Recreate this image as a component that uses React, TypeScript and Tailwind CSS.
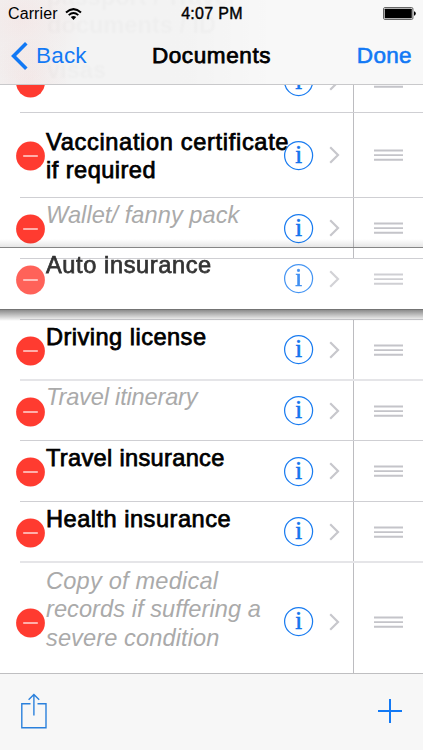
import React from 'react';

type Item = {
  lines: string[];
  spacing: string[];
  packed?: boolean;
  height: string;
  pad: string;
  soft?: boolean;
};

const items: Item[] = [
  { lines: ['Vaccination certificate', 'if required'], spacing: ['tracking-[0.67px]', 'tracking-[0.46px]'], height: 'h-[85px]', pad: 'pt-[15px]' },
  { lines: ['Wallet/ fanny pack'], spacing: ['tracking-[0.06px]'], packed: true, height: 'h-[61px]', pad: 'pt-[3px]' },
  { lines: [], spacing: [], height: 'h-[61px]', pad: '' },
  { lines: ['Driving license'], spacing: ['tracking-[0.47px]'], height: 'h-[60px]', pad: 'pt-[3px]' },
  { lines: ['Travel itinerary'], spacing: ['tracking-[-0.18px]'], packed: true, height: 'h-[61px]', pad: 'pt-[2px]', soft: true },
  { lines: ['Travel insurance'], spacing: ['tracking-[0.32px]'], height: 'h-[61px]', pad: 'pt-[3px]' },
  { lines: ['Health insurance'], spacing: ['tracking-[0.5px]'], height: 'h-[60px]', pad: 'pt-[3px]' },
  { lines: ['Copy of medical', 'records if suffering a', 'severe condition'], spacing: ['tracking-[0.2px]', 'tracking-[0.05px]', 'tracking-[0.1px]'], packed: true, height: 'h-[119px]', pad: 'pt-[4px]', soft: true },
];

function Minus() {
  return (
    <svg className="mt-[2px] block h-[30px] w-[30px] shrink-0" viewBox="0 0 30 30">
      <circle cx="14.5" cy="15" r="14.4" fill="#ff3b30" />
      <path d="M7.2 15H21.8" stroke="#fff" strokeOpacity=".85" strokeWidth="1.4" />
    </svg>
  );
}

function Info() {
  return (
    <svg className="block h-[29px] w-[29px] shrink-0 overflow-visible" viewBox="0 0 29 29">
      <circle cx="14.6" cy="14.5" r="14" fill="none" stroke="#1a7cf0" strokeWidth="1.25" />
      <text x="14.6" y="22.2" textAnchor="middle" fill="#1274ee" stroke="#1274ee" strokeWidth=".6" className="font-['Liberation_Serif',serif] text-[24.5px]">i</text>
    </svg>
  );
}

function Chevron() {
  return (
    <svg className="ml-4 block h-[18px] w-[11px] shrink-0" viewBox="0 0 11 18" fill="none">
      <path d="M1.2 1.2L9 9L1.2 16.8" stroke="#c7c7cc" strokeWidth="2.2" />
    </svg>
  );
}

function Grip() {
  return (
    <svg className="ml-5 block h-[12px] w-[29px]" viewBox="0 0 29 12">
      <path d="M0 1.5H29M0 6.1H29M0 10.7H29" stroke="#c4c4c9" strokeWidth="1.9" />
    </svg>
  );
}

function RowBody({ item, divider }: { item: Item; divider: boolean }) {
  return (
    <div className="-ml-1 flex h-full items-center">
      <Minus />
      <div className={`h-full w-[238px] shrink-0 whitespace-nowrap text-[23.6px] leading-[28.3px] ${item.pad} ${item.packed ? 'italic text-[#aaaaaa]' : 'text-black [-webkit-text-stroke:0.75px_black]'}`}>
        {item.lines.map((line, i) => (
          <div key={line}><span className={item.spacing[i]}>{line}</span></div>
        ))}
      </div>
      <Info />
      <Chevron />
      <div className={`ml-[13px] flex h-full items-center border-l ${divider ? 'border-[#bcbcc0]' : 'border-transparent'}`}>
        <Grip />
      </div>
    </div>
  );
}

function StatusBar() {
  return (
    <div className="grid h-[28px] grid-cols-3 items-center pl-2 pr-[7px]">
      <div className="flex items-center gap-[7px] text-[16px] leading-none">
        <span className="tracking-[0.1px]">Carrier</span>
        <svg className="h-[12px] w-[17px]" viewBox="0 0 17 12" fill="none">
          <path d="M1 4.4Q8.5-2.2 16 4.4" stroke="#000" strokeWidth="2" />
          <path d="M3.7 7.1Q8.5 3 13.3 7.1" stroke="#000" strokeWidth="1.9" />
          <path d="M5.8 9.1Q8.5 7 11.2 9.1L8.5 11.9Z" fill="#000" />
        </svg>
      </div>
      <div className="text-center text-[16px] leading-none tracking-[0.3px] [-webkit-text-stroke:0.4px_black]">4:07 PM</div>
      <svg className="-mt-px h-[13px] w-[33px] justify-self-end" viewBox="0 0 33 13">
        <rect x=".6" y=".6" width="29.3" height="11.8" rx="1.2" fill="#fff" stroke="#555" strokeWidth="1" />
        <rect x="1.7" y="1.7" width="27.1" height="9.6" rx=".5" fill="#000" />
        <path d="M31 4.2Q32.8 4.5 32.8 6.5T31 8.8Z" fill="#000" />
      </svg>
    </div>
  );
}

export default function App() {
  return (
    <div className="relative flex h-[750px] w-[423px] flex-col overflow-hidden bg-white font-['Liberation_Sans',Arial,sans-serif] text-black">
      <header className="relative h-[85px] shrink-0 overflow-hidden border-b border-[#c9c9cb] bg-[#f8f8f8]">
        <div className="absolute inset-0 bg-[radial-gradient(circle_at_22px_20px,rgba(255,70,60,0.06),transparent_62px),radial-gradient(circle_at_28px_82px,rgba(255,70,60,0.06),transparent_45px),linear-gradient(90deg,rgba(0,0,0,0.022),rgba(0,0,0,0.018)_45%,transparent_65%)]" />
        <div aria-hidden="true" className="absolute left-[47px] top-[-17px] whitespace-nowrap text-[23.6px] font-bold leading-[28px] text-black/[0.02] blur-[1px]">
          <div>passport / Travel</div>
          <div>documents / ID</div>
        </div>
        <div aria-hidden="true" className="absolute left-[47px] top-[56px] text-[23.6px] font-bold leading-[28px] text-black/[0.02] blur-[1px]">visas</div>
        <div className="relative">
          <StatusBar />
          <nav className="grid h-[56px] grid-cols-3 items-center pl-[11px] pr-[11px] text-[22.5px] leading-none">
            <span className="flex items-center gap-2 text-[#1279f5]">
              <svg className="h-[28px] w-[17px]" viewBox="0 0 17 28" fill="none">
                <path d="M15.3 1.3L2.6 14L15.3 26.7" stroke="#1279f5" strokeWidth="3.6" />
              </svg>
              <span className="tracking-[0.2px]">Back</span>
            </span>
            <span className="text-center tracking-[0.6px] [-webkit-text-stroke:0.75px_black]">Documents</span>
            <span className="text-right tracking-[0.35px] text-[#1279f5] [-webkit-text-stroke:0.6px_#1279f5]">Done</span>
          </nav>
        </div>
      </header>

      <main className="h-[588px] shrink-0 overflow-hidden">
        <div className="-mt-[34px] ml-5 h-[61px]">
          <RowBody item={{ lines: [], spacing: [], height: '', pad: '' }} divider />
        </div>
        {items.map((item, i) => (
          <div key={i} className={`ml-5 ${item.height} ${item.soft ? 'border-t-2 border-[#e5e5e8]' : 'border-t border-[#cfcfd3]'}`}>
            {item.lines.length > 0 && <RowBody item={item} divider />}
          </div>
        ))}
      </main>

      <footer className="flex flex-1 items-center justify-between border-t border-[#bfbfc1] bg-[#f7f7f7] pb-[2px] pl-[21px] pr-[21px]">
        <svg className="h-[36px] w-[26px]" viewBox="0 0 26 36" fill="none" stroke="#2a80dc" strokeWidth="1.4">
          <path d="M9.5 10.8H.8V34.8H25V10.8H16.5M12.9 22.5V1.5M7.6 6.8L12.9 1.5L18.2 6.8" />
        </svg>
        <svg className="h-[24px] w-[24px]" viewBox="0 0 24 24" fill="none" stroke="#1279f5" strokeWidth="2">
          <path d="M0 12H24M12 0V24" />
        </svg>
      </footer>

      <div className="absolute left-0 top-[239px] w-full">
        <div className="h-[8px] bg-gradient-to-b from-transparent to-black/10" />
        <div className="h-px bg-[#858585]" />
        <div className="h-[61px] pl-5 opacity-80">
          <RowBody item={{ lines: ['Auto insurance'], spacing: ['tracking-[0.6px]'], height: '', pad: 'pt-[3px]' }} divider={false} />
        </div>
        <div className="h-px bg-[#747474]" />
        <div className="h-[11px] bg-gradient-to-b from-black/45 to-transparent" />
      </div>
    </div>
  );
}
